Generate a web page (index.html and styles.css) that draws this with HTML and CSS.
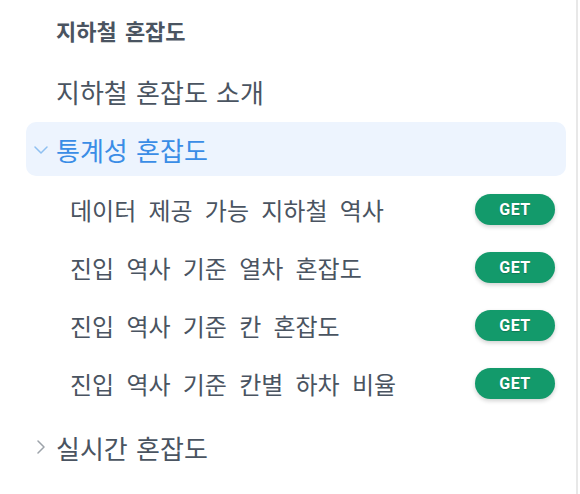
FILE: index.html
```html
<!DOCTYPE html>
<html lang="ko">
<head>
<meta charset="utf-8">
<link rel="stylesheet" href="styles.css">
</head>
<body>
<nav class="sidebar">
  <div class="group-title">지하철 혼잡도</div>
  <a class="item">지하철 혼잡도 소개</a>
  <div class="item folder open">
    <svg class="chev chev-down" width="14" height="8" viewBox="0 0 14 8"><path d="M1 1l6 6 6-6" fill="none" stroke="currentColor" stroke-width="1.5" stroke-linecap="round" stroke-linejoin="round"/></svg>
    <span>통계성 혼잡도</span>
  </div>
  <ul class="sub">
    <li class="sub-item"><span>데이터 제공 가능 지하철 역사</span><span class="badge">GET</span></li>
    <li class="sub-item"><span>진입 역사 기준 열차 혼잡도</span><span class="badge">GET</span></li>
    <li class="sub-item"><span>진입 역사 기준 칸 혼잡도</span><span class="badge">GET</span></li>
    <li class="sub-item"><span>진입 역사 기준 칸별 하차 비율</span><span class="badge">GET</span></li>
  </ul>
  <div class="item folder">
    <svg class="chev chev-right" width="8" height="14" viewBox="0 0 8 14"><path d="M1 1l6 6-6 6" fill="none" stroke="currentColor" stroke-width="1.5" stroke-linecap="round" stroke-linejoin="round"/></svg>
    <span>실시간 혼잡도</span>
  </div>
</nav>
</body>
</html>
```
FILE: styles.css
```css
* { box-sizing: border-box; }
html, body { margin: 0; padding: 0; background: #fff; }
body {
  width: 580px;
  height: 494px;
  overflow: hidden;
  font-family: "Noto Sans CJK KR", "Noto Sans", sans-serif;
  color: #4a5461;
}
.sidebar {
  width: 578px;
  height: 494px;
  border-right: 2px solid #e8e8e8;
  padding: 0 10px 0 26px;
  display: flex;
  flex-direction: column;
}
.group-title {
  height: 60px;
  display: flex;
  align-items: center;
  padding-left: 30px;
  font-size: 22px;
  font-weight: 700;
  word-spacing: 2px;
  color: #4a5461;
}
.item {
  height: 62px;
  display: flex;
  align-items: center;
  padding-left: 30px;
  font-size: 26px;
  word-spacing: 1px;
  color: #4a5461;
  position: relative;
}
.folder { height: 54px; }
.folder.open {
  background: #edf4fe;
  border-radius: 10px;
  color: #3a8de6;
}
.chev {
  position: absolute;
  color: #9da3aa;
}
.chev-down { left: 8px; top: 24px; color: #8fc0f1; }
.chev-right { left: 11px; top: 20px; }
.sub {
  list-style: none;
  margin: 4px 0 8px;
  padding: 0;
}
.sub-item {
  height: 58px;
  display: flex;
  align-items: center;
  justify-content: space-between;
  padding: 0 11px 0 44px;
  font-size: 24px;
  word-spacing: 5.5px;
  color: #4a5461;
}
.badge {
  width: 80px;
  height: 31px;
  border-radius: 16px;
  background: #139a6b;
  color: #fff;
  font-family: Roboto, "Liberation Sans", sans-serif;
  font-weight: 700;
  font-size: 16px;
  letter-spacing: 0.5px;
  word-spacing: 0;
  display: flex;
  align-items: center;
  justify-content: center;
  box-shadow: 0 2px 4px rgba(0,0,0,0.18);
  text-shadow: 0 1px 1px rgba(0,0,0,0.2);
}
```
